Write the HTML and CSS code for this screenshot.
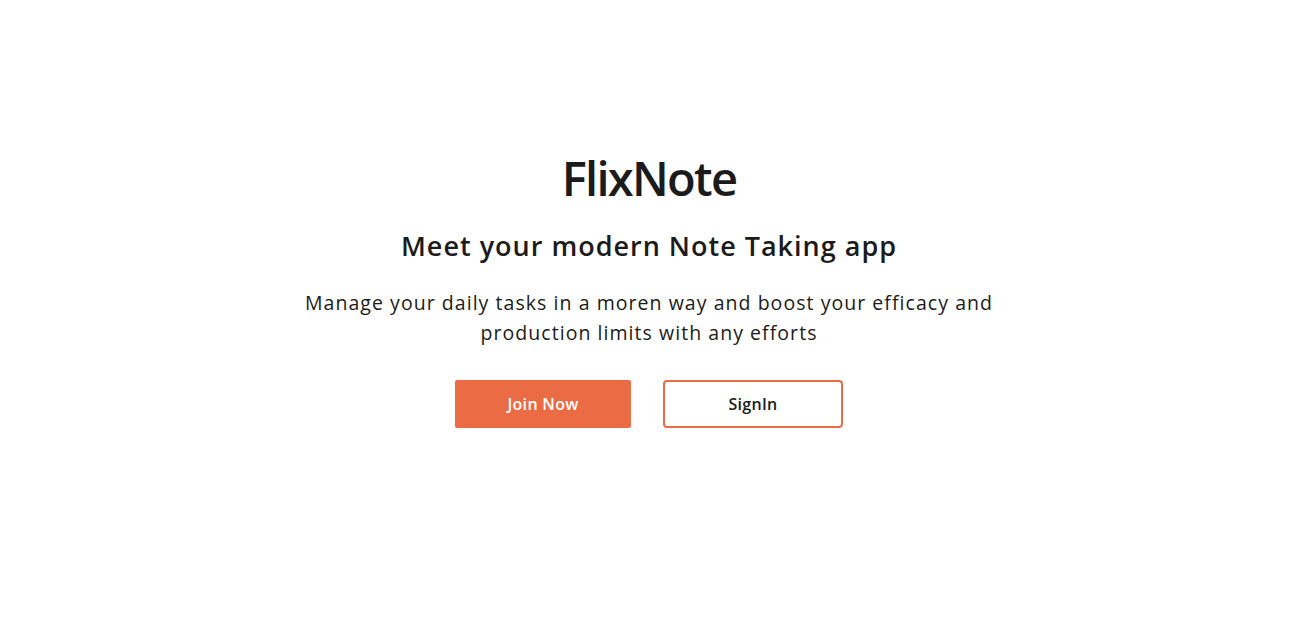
FILE: index.html
```html
<!DOCTYPE html>
<html lang="en">
<head>
<meta charset="utf-8">
<title>FlixNote</title>
<link rel="stylesheet" href="styles.css">
</head>
<body>
<main class="hero">
  <h1 class="hero-title">FlixNote</h1>
  <h2 class="hero-subtitle">Meet your modern Note Taking app</h2>
  <p class="hero-text">Manage your daily tasks in a moren way and boost your efficacy and production limits with any efforts</p>
  <div class="hero-actions">
    <a class="btn btn-primary" href="#">Join Now</a>
    <a class="btn btn-outline" href="#">SignIn</a>
  </div>
</main>
</body>
</html>
```

FILE: styles.css
```css
* { box-sizing: border-box; }
html, body { margin: 0; padding: 0; background: #ffffff; }
body {
  font-family: "Open Sans", "Liberation Sans", sans-serif;
  color: #1b1b1b;
  width: 1298px;
  height: 636px;
  overflow: hidden;
}
.hero {
  display: flex;
  flex-direction: column;
  align-items: center;
  text-align: center;
  padding-top: 146px;
}
.hero-title {
  margin: 0;
  font-size: 47px;
  font-weight: 600;
  line-height: 64px;
  letter-spacing: -1.7px;
}
.hero-subtitle {
  margin: 16px 0 0;
  font-size: 27px;
  font-weight: 600;
  line-height: 40px;
  letter-spacing: 1px;
}
.hero-text {
  margin: 22px 0 0;
  width: 720px;
  font-size: 19.5px;
  font-weight: 400;
  line-height: 30px;
  letter-spacing: 1.05px;
}
.hero-actions {
  display: flex;
  gap: 32px;
  margin-top: 32px;
}
.btn {
  display: flex;
  align-items: center;
  justify-content: center;
  height: 48px;
  font-size: 16px;
  font-weight: 600;
  letter-spacing: 0.3px;
  text-decoration: none;
  border-radius: 2px;
}
.btn-primary {
  width: 176px;
  background: #eb6b45;
  color: #ffffff;
}
.btn-outline {
  width: 180px;
  border: 2px solid #eb6b45;
  border-radius: 4px;
  color: #1b1b1b;
  background: #fff;
}
```
